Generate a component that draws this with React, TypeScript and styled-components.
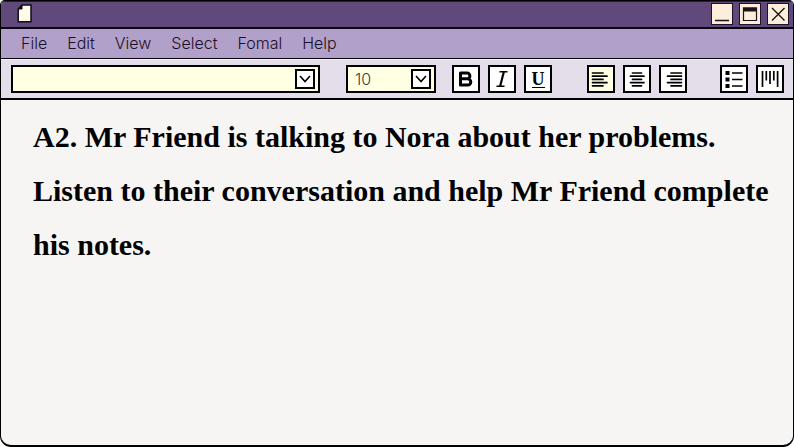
import React from "react";
import styled, { createGlobalStyle } from "styled-components";

const GlobalStyle = createGlobalStyle`
  *, *::before, *::after { box-sizing: border-box; }
  body { margin: 0; background: #ffffff; }
  button, select { font: inherit; color: inherit; }
`;

const Window = styled.div`
  display: flex;
  flex-direction: column;
  min-height: 100vh;
  border: 1px solid #000;
  border-bottom-width: 2px;
  border-radius: 5px 5px 11px 11px;
  overflow: hidden;
  background: #f6f5f4;
  color: #000;
  font-family: Inter, "Open Sans", sans-serif;
`;

const TitleBar = styled.header`
  display: flex;
  align-items: center;
  justify-content: space-between;
  height: 28px;
  padding: 0 4px 2px 16px;
  border-top: 1px solid #2a1c38;
  border-bottom: 2px solid #0c0612;
  background: #614a7b;
`;

const WindowControls = styled.div`
  display: flex;
  gap: 6px;
`;

const ControlButton = styled.button`
  display: flex;
  width: 22px;
  height: 22px;
  padding: 0;
  border: 1px solid #1c1228;
  background: #fdeedb;
`;

const MenuBar = styled.nav`
  display: flex;
  align-items: center;
  gap: 20px;
  height: 30px;
  padding: 0 20px 2px;
  border-bottom: 1px solid #08040c;
  background: #b1a0c9;
`;

const MenuItem = styled.button`
  padding: 0;
  border: 0;
  background: none;
  color: #1c1028;
  font-size: 16px;
  font-weight: 300;
  line-height: 20px;
`;

const Toolbar = styled.div`
  display: flex;
  align-items: center;
  height: 41px;
  padding: 0 9px 0 10px;
  border-top: 1px solid #f6f2fb;
  border-bottom: 2px solid #000;
  background: #e4deeb;
`;

const SelectBox = styled.label<{ $wide?: boolean }>`
  display: grid;
  grid-template-columns: 1fr 20px;
  align-items: center;
  flex: ${(p) => (p.$wide ? "1 1 0" : "0 0 90px")};
  min-width: 0;
  height: 28px;
  margin-right: ${(p) => (p.$wide ? "26px" : "16px")};
  padding-right: 3px;
  border: 2px solid #000;
  background: #ffffe3;
`;

const Select = styled.select`
  grid-area: 1 / 1 / 2 / 3;
  width: 100%;
  height: 24px;
  padding: 0 24px 0 7px;
  border: 0;
  appearance: none;
  background: transparent;
  color: #3c3c34;
  font-size: 16px;
  font-weight: 300;
`;

const Arrow = styled.svg`
  grid-area: 1 / 2 / 2 / 3;
  width: 20px;
  height: 20px;
  pointer-events: none;
`;

const ToolGroup = styled.div<{ $gap?: number }>`
  display: flex;
  gap: 8px;
  margin-left: ${(p) => p.$gap ?? 0}px;
`;

const ToolButton = styled.button<{ $active?: boolean }>`
  display: flex;
  align-items: center;
  justify-content: center;
  width: 28px;
  height: 28px;
  padding: 0;
  border: 2px solid #000;
  background: ${(p) => (p.$active ? "#ffffe3" : "#ffffff")};
`;

const UnderlineGlyph = styled.span`
  border-bottom: 1px solid #000;
  font-family: "Liberation Serif", "Times New Roman", serif;
  font-size: 18px;
  font-weight: 700;
  line-height: 16px;
`;

const Page = styled.main`
  flex: 1;
  padding: 10px 24px 24px 32px;
`;

const Instruction = styled.p`
  margin: 0;
  font-family: "Liberation Serif", "Times New Roman", serif;
  font-size: 30px;
  font-weight: 700;
  line-height: 54px;
`;

const Icon = ({ children }: { children: React.ReactNode }) => (
  <svg width="24" height="24" viewBox="0 0 24 24" fill="none" stroke="#000" strokeWidth="2" aria-hidden="true">
    {children}
  </svg>
);

const ControlIcon = ({ children }: { children: React.ReactNode }) => (
  <svg width="20" height="20" viewBox="0 0 20 20" fill="none" stroke="#1c1418" aria-hidden="true">
    {children}
  </svg>
);

const DropArrow = () => (
  <Arrow viewBox="0 0 20 20" fill="none" stroke="#000" strokeWidth="2" aria-hidden="true">
    <rect x="1" y="1" width="18" height="18" fill="#fff" />
    <path d="M5 7L10 12.5L15 7" strokeWidth="1.6" />
  </Arrow>
);

const menus = ["File", "Edit", "View", "Select", "Fomal", "Help"];

export default function App() {
  return (
    <>
      <GlobalStyle />
      <Window>
        <TitleBar>
          <svg width="16" height="19" viewBox="0 0 16 19" role="img" aria-label="Document">
            <path d="M5 1H14V17.8H1.2V5Z" fill="#fffde8" stroke="#120a18" strokeWidth="1.5" />
            <path d="M5 1V5H1.2Z" fill="#120a18" stroke="#120a18" />
          </svg>
          <WindowControls>
            <ControlButton aria-label="Minimize">
              <ControlIcon>
                <path d="M3 16.5H17" strokeWidth="1.5" />
              </ControlIcon>
            </ControlButton>
            <ControlButton aria-label="Maximize">
              <ControlIcon>
                <path d="M3.5 4H16.5V16.5H3.5Z" strokeWidth="1.2" />
                <path d="M3 5.5H17" strokeWidth="4" />
              </ControlIcon>
            </ControlButton>
            <ControlButton aria-label="Close">
              <ControlIcon>
                <path d="M4 4L16.5 16.5M16.5 4L4 16.5" strokeWidth="1.4" />
              </ControlIcon>
            </ControlButton>
          </WindowControls>
        </TitleBar>
        <MenuBar aria-label="Main menu">
          {menus.map((name) => (
            <MenuItem key={name}>{name}</MenuItem>
          ))}
        </MenuBar>
        <Toolbar role="toolbar" aria-label="Formatting">
          <SelectBox $wide>
            <Select aria-label="Font" defaultValue="">
              <option value="" />
            </Select>
            <DropArrow />
          </SelectBox>
          <SelectBox>
            <Select aria-label="Font size" defaultValue="10">
              <option>10</option>
            </Select>
            <DropArrow />
          </SelectBox>
          <ToolGroup>
            <ToolButton aria-label="Bold">
              <Icon>
                <path d="M6.5 6H13A2.8 2.8 0 0 1 13 11.8H6.5ZM6.5 11.8H13.7A3 3 0 0 1 13.7 18H6.5Z" strokeWidth="3" strokeLinejoin="round" />
              </Icon>
            </ToolButton>
            <ToolButton aria-label="Italic">
              <Icon>
                <path d="M9.5 4.8H17.5M6.5 19.2H14.5" strokeWidth="1.4" />
                <path d="M13.8 5L10.2 19" strokeWidth="2.2" />
              </Icon>
            </ToolButton>
            <ToolButton aria-label="Underline">
              <UnderlineGlyph>U</UnderlineGlyph>
            </ToolButton>
          </ToolGroup>
          <ToolGroup $gap={35}>
            <ToolButton $active aria-label="Align left" aria-pressed="true">
              <Icon>
                <path d="M3.5 6H14M3.5 9.2H18M3.5 12.4H14M3.5 15.6H18M3.5 18.8H14" strokeWidth="1.7" strokeLinecap="round" />
              </Icon>
            </ToolButton>
            <ToolButton aria-label="Align center">
              <Icon>
                <path d="M7.5 6H16.5M5.5 9.2H19M7.5 12.4H16.5M5.5 15.6H19M7.5 18.8H16.5" strokeWidth="1.7" strokeLinecap="round" />
              </Icon>
            </ToolButton>
            <ToolButton aria-label="Align right">
              <Icon>
                <path d="M10 6H20.5M6.5 9.2H20.5M10 12.4H20.5M6.5 15.6H20.5M10 18.8H20.5" strokeWidth="1.7" strokeLinecap="round" />
              </Icon>
            </ToolButton>
          </ToolGroup>
          <ToolGroup $gap={33}>
            <ToolButton aria-label="Bulleted list">
              <Icon>
                <path d="M10 6H20.5M10 12.5H20.5M10 19H20.5" strokeWidth="1.6" />
                <path d="M3.5 6H7.5M3.5 12.5H7.5M3.5 19H7.5" strokeWidth="4" />
              </Icon>
            </ToolButton>
            <ToolButton aria-label="Vertical text">
              <Icon>
                <path d="M4.5 4V20M8.3 4V13.5M12 4V17M15.8 4V13.5M19.6 4V20" strokeWidth="1.7" />
              </Icon>
            </ToolButton>
          </ToolGroup>
        </Toolbar>
        <Page>
          <Instruction>
            A2. Mr Friend is talking to Nora about her problems. Listen to their conversation and help Mr Friend complete his notes.
          </Instruction>
        </Page>
      </Window>
    </>
  );
}
